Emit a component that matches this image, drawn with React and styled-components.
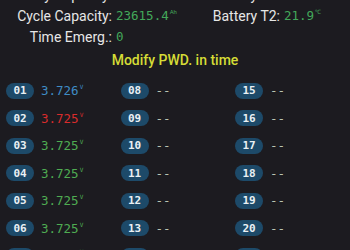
import React from "react";
import styled, { createGlobalStyle } from "styled-components";

const Global = createGlobalStyle`
  html, body { margin: 0; padding: 0; background: #1c1b20; overflow: hidden; }
  body { width: 350px; height: 250px; font-family: Roboto, "Noto Sans", sans-serif; }
`;

const Screen = styled.div`
  width: 350px;
  height: 250px;
  overflow: hidden;
  background: #1c1b20;
`;

const Info = styled.div`
  display: grid;
  grid-template-columns: 112px 60px 100px auto;
  column-gap: 4px;
  grid-auto-rows: 21px;
  margin-top: -16px;
  align-items: center;
`;

const Label = styled.div`
  text-align: right;
  color: #e6e6e6;
  font-size: 14px;
  white-space: nowrap;
`;

const Value = styled.div`
  color: #43a85a;
  font-family: "DejaVu Sans Mono", monospace;
  font-size: 12.5px;
  white-space: nowrap;
`;

const Unit = styled.sup`
  font-family: Roboto, sans-serif;
  font-size: 6px;
  vertical-align: 6px;
  margin-left: 1px;
`;

const Title = styled.div`
  margin-top: 3px;
  height: 20px;
  line-height: 20px;
  text-align: center;
  color: #d5dc36;
  font-size: 14px;
  font-weight: 500;
`;

const Cells = styled.div`
  display: grid;
  grid-template-columns: repeat(3, 114.5px);
  grid-auto-flow: column;
  grid-template-rows: repeat(7, 27.5px);
  padding: 0 0 0 6px;
  margin-top: 7px;
`;

const Cell = styled.div`
  display: flex;
  align-items: center;
`;

const Badge = styled.div`
  width: 28px;
  height: 16px;
  border-radius: 8px;
  background: #1d4a69;
  color: #eaf0f4;
  font-family: "DejaVu Sans Mono", monospace;
  font-size: 11px;
  font-weight: bold;
  display: flex;
  align-items: center;
  justify-content: center;
`;

const colors = { blue: "#3f8cc4", red: "#d82c2c", green: "#4fac52", none: "#b9c4b2" };

const Volt = styled.div`
  margin-left: 7px;
  color: ${(p) => colors[p.$tone]};
  font-family: "DejaVu Sans Mono", monospace;
  font-size: 12.5px;
  white-space: nowrap;
`;

const VUnit = styled.sup`
  font-size: 6px;
  vertical-align: 6px;
  margin-left: 1px;
`;

const cells = [];
for (let i = 1; i <= 21; i++) {
  const id = String(i).padStart(2, "0");
  if (i <= 7) {
    const tone = i === 1 ? "blue" : i === 2 ? "red" : "green";
    cells.push({ id, v: i === 1 ? "3.726" : "3.725", tone });
  } else {
    cells.push({ id, v: null, tone: "none" });
  }
}

export default function App() {
  return (
    <Screen>
      <Global />
      <Info>
        <Label>Battery Capacity:</Label>
        <Value>280.0<Unit>Ah</Unit></Value>
        <Label>Battery T1:</Label>
        <Value>21.8<Unit>℃</Unit></Value>
        <Label>Cycle Capacity:</Label>
        <Value>23615.4<Unit>Ah</Unit></Value>
        <Label>Battery T2:</Label>
        <Value>21.9<Unit>℃</Unit></Value>
        <Label>Time Emerg.:</Label>
        <Value>0</Value>
      </Info>
      <Title>Modify PWD. in time</Title>
      <Cells>
        {cells.map((c) => (
          <Cell key={c.id}>
            <Badge>{c.id}</Badge>
            <Volt $tone={c.tone}>
              {c.v ? (
                <>
                  {c.v}
                  <VUnit>V</VUnit>
                </>
              ) : (
                "--"
              )}
            </Volt>
          </Cell>
        ))}
      </Cells>
    </Screen>
  );
}
